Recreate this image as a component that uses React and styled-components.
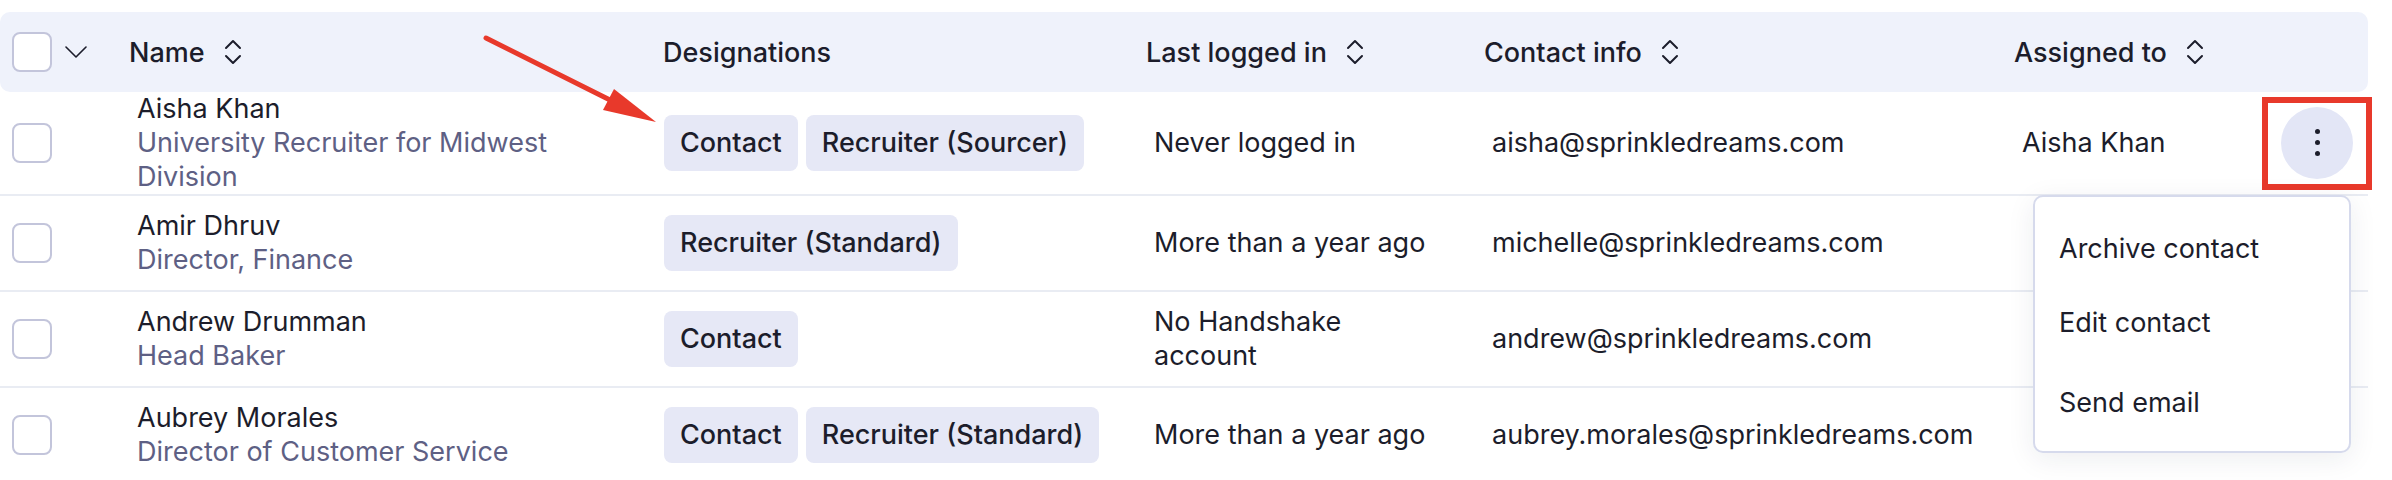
import React from 'react';
import styled, { createGlobalStyle } from 'styled-components';

const GlobalStyle = createGlobalStyle`
    body {
        margin: 0;
        background: #ffffff;
        font-family: Inter, "Noto Sans", sans-serif;
        color: #1c1d2b;
    }
`;

const columns = '129px 534px 483px 338px 530px 248px 1fr';

const Page = styled.div`
    position: relative;
    padding: 12px 24px 0 0;
`;

const HeaderRow = styled.div`
    display: grid;
    grid-template-columns: ${columns};
    align-items: center;
    height: 80px;
    background: #eff2fb;
    border-radius: 10px;
`;

const HeaderCell = styled.div`
    display: flex;
    align-items: center;
    gap: 18px;
    font-size: 27px;
    font-weight: 500;
    color: #1c1d2b;
`;

const SelectCell = styled.div`
    display: flex;
    align-items: center;
    gap: 13px;
    padding-left: 12px;
`;

const Checkbox = styled.span`
    display: inline-block;
    width: 36px;
    height: 36px;
    border: 2px solid #c3c5db;
    border-radius: 8px;
    background: #ffffff;
`;

const BodyRow = styled.div`
    display: grid;
    grid-template-columns: ${columns};
    align-items: center;
    min-height: 94px;
    border-bottom: 2px solid #e9ecf3;
`;

const Cell = styled.div`
    padding-left: ${({ $inset }) => ($inset === undefined ? 8 : $inset)}px;
    font-size: 27px;
    line-height: 34px;
    max-width: ${({ $max }) => ($max ? `${$max}px` : 'none')};
`;

const Subtitle = styled.div`
    color: #5e6084;
`;

const Tags = styled.div`
    display: flex;
    gap: 8px;
`;

const Tag = styled.span`
    display: inline-flex;
    align-items: center;
    height: 56px;
    padding: 0 16px;
    border-radius: 8px;
    background: #e6e8f6;
    font-size: 27px;
    font-weight: 500;
    color: #1c1d2b;
`;

const ActionCell = styled.div`
    display: flex;
    justify-content: center;
`;

const Highlight = styled.span`
    display: inline-flex;
    padding: 4px 13px 5px;
    border: 6px solid #e8392b;
`;

const KebabButton = styled.span`
    display: flex;
    flex-direction: column;
    align-items: center;
    justify-content: center;
    gap: 6px;
    width: 72px;
    height: 72px;
    border-radius: 50%;
    background: #e3e6f6;

    i {
        width: 5px;
        height: 5px;
        border-radius: 50%;
        background: #1c1d2b;
    }
`;

const Menu = styled.div`
    position: absolute;
    top: 195px;
    right: 41px;
    width: 318px;
    height: 258px;
    box-sizing: border-box;
    padding-top: 13px;
    background: #ffffff;
    border: 2px solid #d6daec;
    border-radius: 10px;
    box-shadow: 0 6px 28px rgba(30, 35, 70, 0.08);
`;

const MenuItem = styled.div`
    display: flex;
    align-items: center;
    height: ${({ $h }) => $h}px;
    padding-left: 24px;
    font-size: 27px;
    color: #1c1d2b;
`;

const Arrow = styled.svg`
    position: absolute;
    left: 0;
    top: 0;
    pointer-events: none;
`;

const SortIcon = () => (
    <svg width="20" height="26" viewBox="0 0 20 26" fill="none" stroke="#1c1d2b" strokeWidth="2" strokeLinecap="round" strokeLinejoin="round">
        <path d="M3 9 L10 2 L17 9" />
        <path d="M3 17 L10 24 L17 17" />
    </svg>
);

const people = [
    {
        name: 'Aisha Khan',
        title: 'University Recruiter for Midwest Division',
        tags: ['Contact', 'Recruiter (Sourcer)'],
        last: 'Never logged in',
        email: 'aisha@sprinkledreams.com',
        assigned: 'Aisha Khan',
        menu: true,
    },
    {
        name: 'Amir Dhruv',
        title: 'Director, Finance',
        tags: ['Recruiter (Standard)'],
        last: 'More than a year ago',
        email: 'michelle@sprinkledreams.com',
    },
    {
        name: 'Andrew Drumman',
        title: 'Head Baker',
        tags: ['Contact'],
        last: 'No Handshake account',
        email: 'andrew@sprinkledreams.com',
    },
    {
        name: 'Aubrey Morales',
        title: 'Director of Customer Service',
        tags: ['Contact', 'Recruiter (Standard)'],
        last: 'More than a year ago',
        email: 'aubrey.morales@sprinkledreams.com',
    },
];

const App = () => {
    return (
        <Page>
            <GlobalStyle />
            <HeaderRow>
                <SelectCell>
                    <Checkbox />
                    <svg width="22" height="12" viewBox="0 0 22 12" fill="none" stroke="#1c1d2b" strokeWidth="1.6" strokeLinecap="round" strokeLinejoin="round">
                        <path d="M1 1 L11 11 L21 1" />
                    </svg>
                </SelectCell>
                <HeaderCell>
                    Name <SortIcon />
                </HeaderCell>
                <HeaderCell>Designations</HeaderCell>
                <HeaderCell>
                    Last logged in <SortIcon />
                </HeaderCell>
                <HeaderCell>
                    Contact info <SortIcon />
                </HeaderCell>
                <HeaderCell>
                    Assigned to <SortIcon />
                </HeaderCell>
                <div />
            </HeaderRow>

            {people.map(person => (
                <BodyRow key={person.name}>
                    <SelectCell>
                        <Checkbox />
                    </SelectCell>
                    <Cell $max={470}>
                        <div>{person.name}</div>
                        <Subtitle>{person.title}</Subtitle>
                    </Cell>
                    <Cell $inset={1}>
                        <Tags>
                            {person.tags.map(tag => (
                                <Tag key={tag}>{tag}</Tag>
                            ))}
                        </Tags>
                    </Cell>
                    <Cell $max={285}>{person.last}</Cell>
                    <Cell>{person.email}</Cell>
                    <Cell>{person.assigned}</Cell>
                    <ActionCell>
                        {person.menu && (
                            <Highlight>
                                <KebabButton>
                                    <i />
                                    <i />
                                    <i />
                                </KebabButton>
                            </Highlight>
                        )}
                    </ActionCell>
                </BodyRow>
            ))}

            <Menu>
                <MenuItem $h={76}>Archive contact</MenuItem>
                <MenuItem $h={72}>Edit contact</MenuItem>
                <MenuItem $h={88}>Send email</MenuItem>
            </Menu>

            <Arrow width="700" height="140" viewBox="0 0 700 140">
                <line x1="486" y1="38" x2="612" y2="101" stroke="#e8392b" strokeWidth="5" strokeLinecap="round" />
                <polygon points="614,89 603,110 656,122" fill="#e8392b" />
            </Arrow>
        </Page>
    );
};

export default App;
